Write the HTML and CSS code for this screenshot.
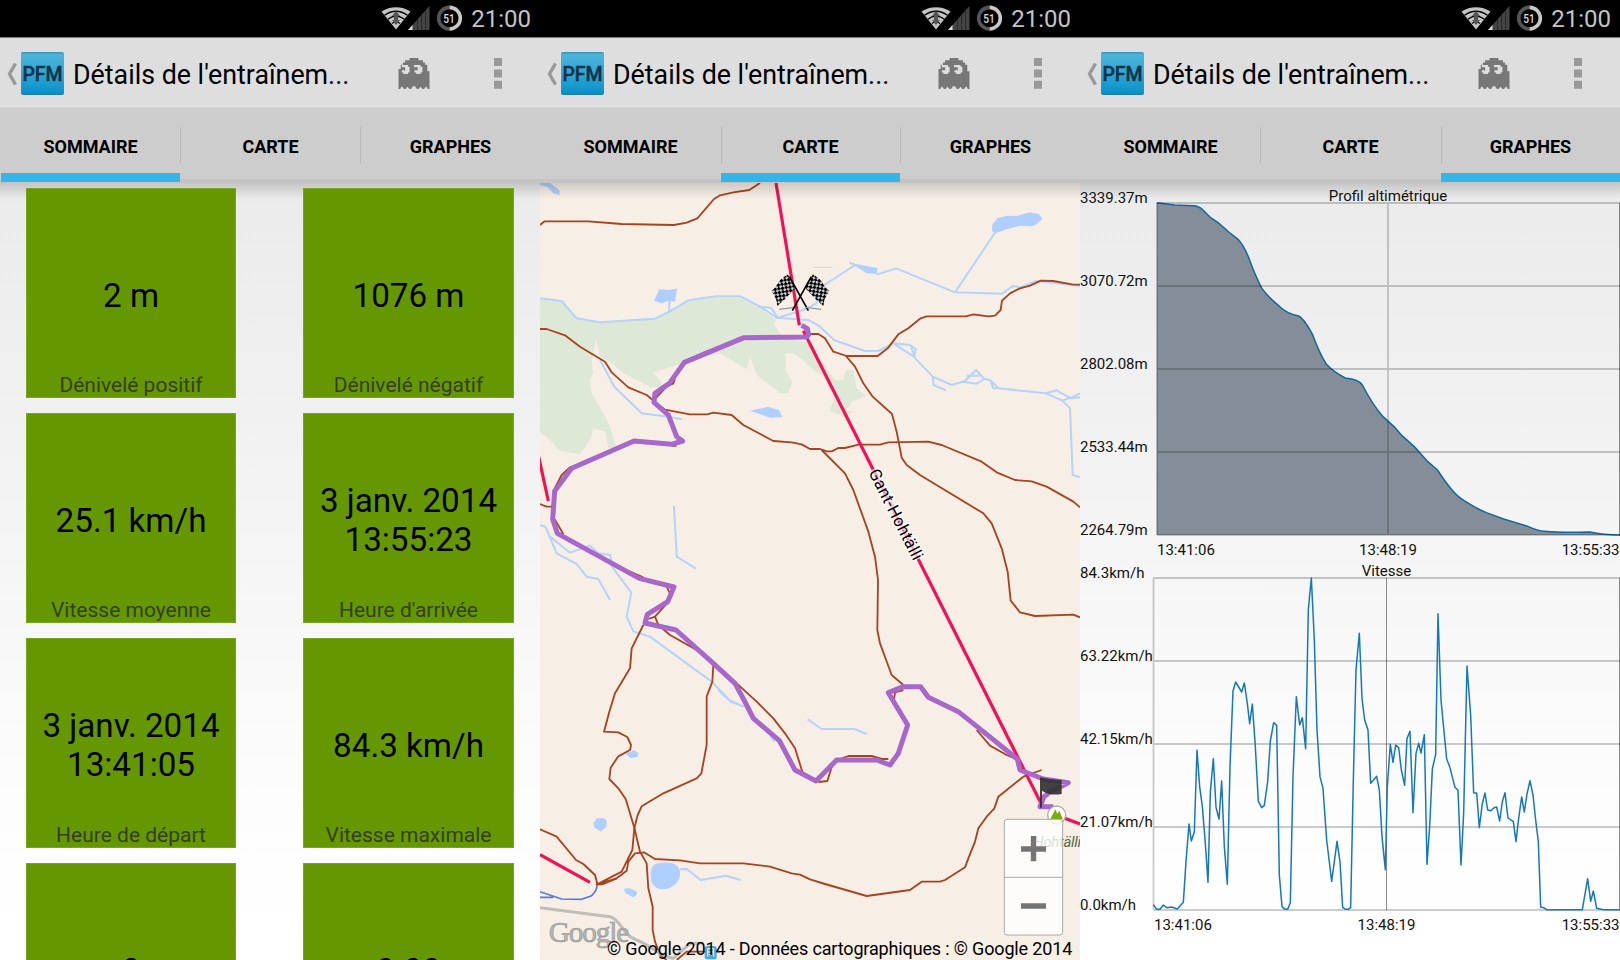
FILE: index.html
```html
<!DOCTYPE html>
<html lang="fr">
<head>
<meta charset="utf-8">
<title>Détails de l'entraînement</title>
<link rel="stylesheet" href="styles.css">
</head>
<body>
<svg class="defs" width="0" height="0" aria-hidden="true">
  <defs>
    <linearGradient id="sheen" x1="0" y1="0" x2="0" y2="1"><stop offset="0" stop-color="#3a8fb0"/><stop offset=".06" stop-color="#4cb4da"/><stop offset=".5" stop-color="#2fa6d4"/><stop offset=".93" stop-color="#0d94cb"/><stop offset="1" stop-color="#1c7fa8"/></linearGradient>
    <symbol id="status" viewBox="0 0 90 37">
      <path d="M1.500 11.500C10 5.700 22 5.700 30.500 11.500L16 29.500Z" fill="#c4c4c4"/>
      <path d="M4.500 15.200C12 10 20 10 27.500 15.200M8 19.300C13 15.300 19 15.300 24.500 19.300M12 23.500C14.500 21.500 17.500 21.500 20 23.500" fill="none" stroke="#000" stroke-width="1.300"/>
      <path d="M16 11L20 16H18V20H20L16 25L12 20H14V16H12Z" fill="#555"/>
      <path d="M28 30L49.500 6V30Z" fill="#444"/>
      <path d="M28 30L32.500 25V30Z" fill="#ddd"/>
      <path d="M37.500 19V30M41.500 14V30M45.500 10V30" stroke="#222" stroke-width=".8"/>
      <path d="M69.500 7.400A10.800 10.800 0 0 0 69.500 29" fill="none" stroke="#555" stroke-width="3.600"/>
      <path d="M69.500 7.400A10.800 10.800 0 0 1 69.500 29" fill="none" stroke="#c8c8c8" stroke-width="3.600"/>
      <text x="69" y="22.800" font-size="12.500" font-weight="500" text-anchor="middle" fill="#ddd" textLength="11.500" lengthAdjust="spacingAndGlyphs">51</text>
    </symbol>
    <symbol id="back" viewBox="0 0 10 22"><path d="M8.500 .5L2.500 11L8.500 21.500" fill="none" stroke="#999" stroke-width="3.400"/></symbol>
    <symbol id="pfm" viewBox="0 0 43 43">
      <rect width="43" height="43" rx="2" fill="url(#sheen)"/>
      <text x="21.500" y="29.300" text-anchor="middle" font-size="19.500" font-weight="500" fill="#123448" stroke="#123448" stroke-width=".4" textLength="40">PFM</text>
    </symbol>
    <symbol id="ghost" viewBox="0 0 14 14">
      <path fill-rule="evenodd" fill="#777" d="M5 0H9V1H11V2H12V3H13V6H14V14H13.300L12.500 12.800L11.500 14H10.800L10 13L9 14H8.300L7.500 12.800H6.500L5.700 14H5L4 13L3.200 14H2.500L1.500 12.800L.7 14H0V5H1V3H2V2H3V1H5ZM1.500 3.200V4.200H3V5.500H1.500V6.500H2.200V7.200H4.300V6.500H5V4H4.300V3.200ZM7 3.200V4.200H8.700V5.500H7.200V6.500H8V7.200H10V6.500H10.800V4H10V3.200Z"/>
    </symbol>
    <symbol id="more" viewBox="0 0 8 31"><path d="M0 0H8V8H0ZM0 11.400H8V19.400H0ZM0 22.800H8V30.800H0Z" fill="#999"/></symbol>
    <pattern id="checks" width="16" height="16" patternUnits="userSpaceOnUse" patternTransform="translate(695 335) rotate(36)">
      <rect width="16" height="16" fill="#ccc"/><path d="M0 0H9V9H0ZM8 8H16V16H8Z" fill="#000"/>
    </pattern>
    <g id="race-flag">
      <path d="M695 332L706 322L720 300L743 283L753 300L768 322L752 340L732 360L712 378L709 360Z" fill="url(#checks)"/>
      <path d="M748 290L805 392" stroke="#000" stroke-width="5"/>
      <path d="M718 388L764 382" stroke="#999" stroke-width="4"/>
    </g>
  </defs>
</svg>

<main class="screens">
  <section class="phone">
    <div class="statusbar"><svg class="status-icons"><use href="#status"/></svg><span class="clock">21:00</span></div>
    <header class="actionbar">
      <svg class="back"><use href="#back"/></svg><svg class="logo"><use href="#pfm"/></svg>
      <h1 class="title">Détails de l'entraînem...</h1>
      <svg class="ghost"><use href="#ghost"/></svg><svg class="more"><use href="#more"/></svg>
    </header>
    <nav class="tabs"><span class="tab active">SOMMAIRE</span><span class="tab">CARTE</span><span class="tab">GRAPHES</span></nav>
    <div class="content summary">
      <article class="tile"><p class="value">2 m</p><p class="label">Dénivelé positif</p></article>
      <article class="tile"><p class="value">1076 m</p><p class="label">Dénivelé négatif</p></article>
      <article class="tile"><p class="value">25.1 km/h</p><p class="label">Vitesse moyenne</p></article>
      <article class="tile"><p class="value">3 janv. 2014<br>13:55:23</p><p class="label">Heure d'arrivée</p></article>
      <article class="tile"><p class="value">3 janv. 2014<br>13:41:05</p><p class="label">Heure de départ</p></article>
      <article class="tile"><p class="value">84.3 km/h</p><p class="label">Vitesse maximale</p></article>
      <article class="tile"><p class="value">0</p></article>
      <article class="tile"><p class="value">0.00</p></article>
    </div>
  </section>

  <section class="phone">
    <div class="statusbar"><svg class="status-icons"><use href="#status"/></svg><span class="clock">21:00</span></div>
    <header class="actionbar">
      <svg class="back"><use href="#back"/></svg><svg class="logo"><use href="#pfm"/></svg>
      <h1 class="title">Détails de l'entraînem...</h1>
      <svg class="ghost"><use href="#ghost"/></svg><svg class="more"><use href="#more"/></svg>
    </header>
    <nav class="tabs"><span class="tab">SOMMAIRE</span><span class="tab active">CARTE</span><span class="tab">GRAPHES</span></nav>
    <div class="content map">
      <svg class="map-canvas" viewBox="0 9 1620 2331">
        <path class="wood" d="M0 357L65 365L112 416L182 427L345 416L440 363L530 352H600L650 378L710 420L700 432L725 465L810 490L830 530L865 570L885 600L910 600L920 568L940 570L950 625L978 648L935 665L920 690L940 695L915 712L870 692L885 645L850 590L835 580L810 562L790 540L757 520L737 520L737 570L757 605L745 640L720 640L650 585L630 530L620 568L540 520L433 550L400 558L338 578L360 600L370 625L330 620L250 580L210 545L180 530L168 475L155 545L160 580L150 600L155 640L185 690L210 740L228 800L205 805L197 755L160 745L150 780L120 823L60 812L30 780L0 755Z"/>
        <g class="lake">
          <path d="M0 9H30L58 30L60 46L40 40L22 20L0 16ZM358 328L385 330L411 326L405 365L385 362L365 370L342 362ZM630 692L685 681L717 690L727 711L690 713L665 704ZM930 248L1013 265L1011 282L980 280ZM1357 135L1372 115L1400 107L1430 108L1470 97L1497 103L1507 116L1490 133L1475 139L1440 137L1400 148L1366 160L1356 152Z"/>
          <path d="M256 1721L283 1710L296 1720L292 1730L273 1735ZM160 1930L170 1915L190 1914L201 1922L199 1940L182 1955L163 1942ZM252 2126L270 2125L291 2135L289 2146L280 2152L256 2140ZM332 2090C330 2055 345 2047 372 2048C395 2045 422 2055 420 2080C422 2105 395 2128 368 2128C345 2125 333 2115 332 2090Z"/>
        </g>
        <g class="river">
          <path d="M0 355L65 363L110 415L180 427L345 416L388 395L445 361L530 349H602L660 380L710 413L805 420L835 436L882 480L975 513H1015L1060 490L1110 495L1127 507L1123 532L1178 590L1235 615L1275 603L1308 570L1333 597L1310 611L1270 605M1060 490L1125 532L1113 500M1178 590L1181 615L1218 631M1280 587H1320M1333 597L1352 601L1376 625L1518 640L1550 631L1592 655L1620 652M1352 601L1360 625H1376M1518 640L1567 662L1590 685L1598 885L1620 892M1567 662L1600 650L1620 640"/>
          <path d="M388 395V362M655 380L693 383L713 413L790 390L830 370L830 330L945 255L928 248M1010 284L1068 265L1245 337L1387 341L1418 318L1440 322L1490 302L1550 310L1620 318M1245 337L1365 158M180 540L223 620L305 700L385 710L425 718M0 1035L17 1041L28 1068L90 1118L150 1097L175 1120L211 1125L216 1160L274 1238L260 1310L280 1354L330 1370L515 1505L568 1560L610 1580M28 1068L50 1120L110 1152L140 1190L175 1197L210 1260M402 977L410 1130L468 1166M535 1530L572 1565L612 1580M690 1665L703 1685M803 1618L845 1647H943L980 1662M420 2068L440 2067L482 2100L558 2087L602 2100"/>
        </g>
        <g class="trail">
          <path d="M0 135L14 124H145L245 132L402 135L440 128L472 115L522 57L540 46L580 37L628 30L660 9"/>
          <path d="M0 447H20L75 466L120 500L195 545L215 577L265 622L320 645L340 662L375 689L450 703H502L520 698L575 705L610 735L700 783L755 787L785 793L810 807H840L860 814H875L895 804L915 804L955 794H1020L1045 787L1165 785L1205 795L1325 845L1370 877L1425 900L1475 904L1520 920L1600 965L1620 982"/>
          <path d="M810 462H835L855 475L880 515L920 528H1013L1043 505L1075 463L1105 445L1142 415L1160 409H1278L1300 403L1345 409L1365 407L1382 390L1386 362L1410 340L1440 325L1470 317L1503 302L1540 303L1600 314H1620"/>
          <path d="M918 528L945 560L970 610L998 650L1056 702L1070 755L1085 833L1100 855L1140 885L1330 1000L1355 1030L1385 1105L1403 1175L1412 1262L1440 1297L1485 1308L1600 1304L1620 1312"/>
          <path d="M845 810L915 880L940 930L985 1055L1005 1130L1014 1200L1012 1350L1020 1390L1055 1485L1090 1515M1090 1530L1065 1537L1062 1560M385 705L410 775M340 662L380 620L400 610L405 597M433 547L500 514L540 503M395 798L410 797M92 860L65 885L44 925M44 1018L70 1062M0 972L20 980H38M270 1175L310 1192M380 1220L390 1240M383 1268L345 1310L325 1317M345 1310L355 1335L390 1365L470 1410L590 1510L650 1565L700 1615L735 1660L765 1705L790 1785"/>
          <path d="M310 1335L275 1405L270 1465L225 1540L208 1595L192 1655L235 1657L262 1671L273 1695L270 1710L235 1729L212 1763L208 1797L235 1825L257 1857L283 1943L300 2015L320 2050L325 2125L338 2180V2250L345 2285L360 2325L380 2340"/>
          <path d="M520 1455L517 1505L500 1550V1695L484 1780L470 1795L370 1840L305 1879L293 1905L283 1945L277 2010L245 2075L170 2114L230 2095L260 2072L265 2045L285 2020L312 2017L345 2037L420 2041L480 2050H610L690 2060L755 2080L780 2084L810 2098L855 2112L980 2148L1110 2130L1145 2105H1200L1215 2100L1275 2062L1285 2035L1305 1985L1315 1945L1340 1910L1363 1885L1375 1850L1450 1790L1505 1770"/>
          <path d="M170 2114L190 2112L230 2095M0 1948L50 1970L108 2040L130 2052L165 2085L172 2112M835 1806L862 1803L880 1745L925 1728H995L1025 1737L1045 1737M1310 1650L1350 1697L1400 1725L1425 1735"/>
          <path d="M410 2340L440 2315H540"/>
        </g>
        <path class="road" d="M0 2183L210 2210C245 2220 245 2265 290 2280C340 2300 360 2330 400 2335L450 2290H490"/>
        <path class="rail" d="M0 2135L65 2157L125 2158L155 2147Q172 2130 171 2115M0 2152H40"/>
        <g class="lift"><path d="M708 9L778 436"/><path d="M790 452L1508 1880"/><path d="M-4 830L25 963"/><path d="M0 2024L150 2107"/><path d="M1540 1902L1620 1932"/></g>
        <use href="#race-flag"/><use href="#race-flag" transform="matrix(-1 0 0 1 1562 0)"/>
        <path d="M820 262H877" stroke="#ddd5cc" stroke-width="3"/>
        <path class="track" d="M785 436L802 446L806 464L800 471L612 473L433 547L388 610L345 640L342 667L385 705L410 770L428 783L395 793L282 783L95 865L44 933L38 1018L52 1060L298 1195L402 1221L383 1265L322 1303L315 1329L408 1350L520 1450L585 1510L612 1560L640 1615L718 1682L765 1770L828 1803L890 1740H1010L1050 1755L1075 1720L1103 1635L1045 1538L1090 1520H1142L1165 1552L1255 1595L1330 1655L1432 1737L1440 1770L1510 1797L1585 1808L1530 1836L1512 1850L1500 1880H1540"/>
        <text class="lift-name" transform="translate(1066 1004) rotate(63)" text-anchor="middle" y="15" textLength="300">Gant-Hohtälli</text>
        <path d="M1500 1792Q1535 1800 1565 1800V1842Q1530 1848 1506 1832V1883H1500Z" fill="#333" opacity=".92"/>
        <circle cx="1550" cy="1905" r="27" fill="#fff" stroke="#aaa" stroke-width="4"/>
        <path d="M1531 1917L1546 1888L1552 1902L1558 1892L1568 1917Z" fill="#78b000"/>
        <text class="place" x="1480" y="2000" textLength="143">Hohtälli</text>
        <rect x="494" y="2298" width="36" height="40" rx="8" fill="#4ba3ea"/>
        <path d="M503 2330V2306H521V2330M503 2316H521M507 2324H517" fill="none" stroke="#fff" stroke-width="3"/>
        <text class="google" x="26" y="2285" textLength="242">Google</text>
        <g><rect x="1393" y="1918" width="175" height="347" rx="8" fill="#fff" fill-opacity=".78" stroke="#aaa" stroke-width="3"/>
        <path d="M1393 2092H1568" stroke="#aaa" stroke-width="3"/>
        <path d="M1443 2007H1518M1480.500 1968V2044M1443 2178H1518" stroke="#757575" stroke-width="16"/></g>
        <text class="credit" x="201" y="2324" textLength="1396">© Google 2014 - Données cartographiques : © Google 2014</text>
      </svg>
    </div>
  </section>

  <section class="phone">
    <div class="statusbar"><svg class="status-icons"><use href="#status"/></svg><span class="clock">21:00</span></div>
    <header class="actionbar">
      <svg class="back"><use href="#back"/></svg><svg class="logo"><use href="#pfm"/></svg>
      <h1 class="title">Détails de l'entraînem...</h1>
      <svg class="ghost"><use href="#ghost"/></svg><svg class="more"><use href="#more"/></svg>
    </header>
    <nav class="tabs"><span class="tab">SOMMAIRE</span><span class="tab">CARTE</span><span class="tab active">GRAPHES</span></nav>
    <div class="content graphs">
      <svg class="chart altitude" viewBox="0 183 540 377">
        <g transform="translate(0 180) scale(.34436 .33333)">
          <path class="area" d="M223 1065V68L275 75L330 77Q345 78 355 88L378 112L400 127L432 156L460 179Q475 195 490 233Q508 285 528 325Q545 350 580 380Q600 400 635 408Q650 415 675 463Q695 520 715 552Q735 575 770 594Q810 598 820 615Q850 675 880 710L915 743L935 767L970 799L1010 845L1038 870Q1060 905 1078 927Q1095 950 1120 965Q1150 985 1180 998L1230 1017L1300 1039Q1330 1052 1350 1054Q1400 1059 1480 1056Q1520 1065 1568 1065Z"/>
          <path class="line" d="M223 68L275 75L330 77Q345 78 355 88L378 112L400 127L432 156L460 179Q475 195 490 233Q508 285 528 325Q545 350 580 380Q600 400 635 408Q650 415 675 463Q695 520 715 552Q735 575 770 594Q810 598 820 615Q850 675 880 710L915 743L935 767L970 799L1010 845L1038 870Q1060 905 1078 927Q1095 950 1120 965Q1150 985 1180 998L1230 1017L1300 1039Q1330 1052 1350 1054Q1400 1059 1480 1056Q1520 1065 1568 1065"/>
        </g>
        <path class="grid" d="M77 203H540M77 286H540M77 369H540M77 452H540M77 535H540M77 203V535M308 203V535"/>
        <path class="grid dark" d="M539.500 203V535"/>
        <text x="0" y="202.500">3339.37m</text><text x="0" y="285.500">3070.72m</text><text x="0" y="368.500">2802.08m</text><text x="0" y="451.500">2533.44m</text><text x="0" y="534.500">2264.79m</text>
        <text x="308" y="200.500" class="mid">Profil altimétrique</text>
        <text x="77" y="554.500">13:41:06</text><text x="308" y="554.500" class="mid">13:48:19</text><text x="539.500" y="554.500" class="end">13:55:33</text>
      </svg>
      <svg class="chart speed" viewBox="0 560 540 400">
        <path class="grid" d="M73.500 578H540M73.500 661H540M73.500 744H540M73.500 827H540M73.500 910H540M73.500 578V910"/>
        <path class="grid dark" d="M306.500 578V910M539.500 578V910"/>
        <g transform="translate(0 560) scale(.33333)">
          <path class="line" d="M220 1034L230 1048H240L250 1035L260 1043L275 1041L292 1047L310 1027L318 905L327 792L334 843L343 815L351 571L359 680L367 740L376 850L384 967L391 697L400 596L408 742L417 777L425 663L433 860L442 973L450 620L459 393L467 366L485 396L493 369L502 430L509 491L517 432L526 560L535 724L545 743L553 736L563 665L571 543L581 488L590 496L598 945L606 1040L615 1048H623L631 1028L639 650L649 410L659 495L667 473L677 566L685 148L694 54L703 240L711 510L720 650L729 685L740 840L755 964L763 905L771 844L780 905L788 1042L797 1048H805L812 1042L820 660L828 330L838 220L846 415L854 480L864 510L872 670L890 649L898 690L906 830L916 929L922 680L931 553L939 607L947 555L956 563L964 630L974 676L981 535L990 514L999 758L1008 580L1016 550L1023 579L1033 524L1041 913L1049 800L1057 627L1067 583L1074 161L1083 420L1100 597L1109 620L1125 682L1134 691L1143 915L1151 760L1161 318L1172 465L1181 699H1190L1198 803L1207 730L1215 699L1223 750L1233 752L1242 743L1250 741L1259 783L1267 725L1275 698L1284 774L1300 785L1308 845L1316 775L1325 711L1333 756L1341 702L1350 662L1359 705L1367 780L1375 845L1382 1041L1391 1043L1400 1049H1507L1523 956L1532 1024L1540 993L1550 1045L1570 1049H1620"/>
        </g>
        <text x="0" y="577.500">84.3km/h</text><text x="0" y="660.500">63.22km/h</text><text x="0" y="743.500">42.15km/h</text><text x="0" y="826.500">21.07km/h</text><text x="0" y="909.500">0.0km/h</text>
        <text x="306.500" y="576" class="mid">Vitesse</text>
        <text x="74" y="929.500">13:41:06</text><text x="306.500" y="929.500" class="mid">13:48:19</text><text x="539.500" y="929.500" class="end">13:55:33</text>
      </svg>
    </div>
  </section>
</main>
</body>
</html>
```
FILE: styles.css
```css
* { box-sizing: border-box; }
body { margin: 0; width: 1620px; height: 960px; overflow: hidden; font-family: Roboto, "Noto Sans", sans-serif; color: #000; }
.defs { display: block; }
svg { display: block; flex: none; }
svg text { font-family: Roboto, "Noto Sans", sans-serif; }
.screens { display: grid; grid-template-columns: repeat(3, 540px); height: 960px; }
.phone { display: flex; flex-direction: column; height: 960px; overflow: hidden; }

.statusbar { display: flex; flex: none; height: 38px; padding-right: 9px; justify-content: flex-end; background: #000; border-bottom: 1px solid #777; color: #c4c4c4; }
.status-icons { width: 90px; height: 37px; }
.clock { width: 61px; text-align: right; font-size: 24px; line-height: 39px; }

.actionbar { display: flex; flex: none; align-items: center; height: 69px; padding: 2px 38px 0 7px; background: #dedede; }
.back { width: 10px; height: 22px; margin-right: 4px; }
.logo { width: 43px; height: 43px; }
.title { flex: 1; margin: 2px 0 0 9px; font-size: 26.800px; font-weight: 400; line-height: 32px; white-space: nowrap; }
.ghost { width: 32px; height: 31px; margin-right: 64px; }
.more { width: 8px; height: 31px; }

.tabs { display: grid; grid-template-columns: repeat(3, 1fr); flex: none; height: 76px; padding-top: 4px; background: #cdcdcd; border-bottom: 4px solid #c3c3c3; border-top: 1px solid #d6d6d6; }
.tab { display: flex; align-items: center; justify-content: center; height: 70px; padding: 0 0 1px 1px; font-size: 18px; font-weight: 700; background: linear-gradient(#b9b9b9, #b9b9b9) left 0 top 15px / 1px 37px no-repeat; }
.tab:first-child { background: none; }
.tab.active { border-bottom: 9px solid #35b5e7; padding: 8px 0 0; margin-left: 1px; }

.content { flex: 1; min-height: 0; background: linear-gradient(rgba(0,0,0,.16), rgba(0,0,0,0) 16px), linear-gradient(#ebebeb, #f1f1f1 30%, #fdfdfd 80%, #fff); }
.summary { display: grid; grid-template-columns: 210px 211px; grid-auto-rows: 210px; column-gap: 67px; row-gap: 15px; padding: 5.400px 26px 0; overflow: hidden; align-content: start; }
.tile { display: grid; grid-template: 1fr / 1fr; background: #659800; border: 1px solid #78a520; }
.value, .label { grid-area: 1 / 1; margin: 0; text-align: center; }
.value { align-self: center; padding-top: 5px; font-size: 33.200px; line-height: 38.500px; }
.label { align-self: end; font-size: 21px; line-height: 24px; color: #33401a; }

.map { position: relative; background: #f7efe6; }
.map::after { content: ""; position: absolute; inset: 0 0 auto; height: 16px; background: linear-gradient(rgba(0,0,0,.16), rgba(0,0,0,0)); }
.map-canvas { width: 540px; height: 777px; }
.map path { stroke-linejoin: round; }
.wood { fill: #dee8d7; }
.lake { fill: #aecfff; }
.river { fill: none; stroke: #b5d3fb; stroke-width: 6; }
.trail { fill: none; stroke: #a8431f; stroke-width: 5.500; }
.road { fill: none; stroke: #bfbdb8; stroke-width: 9; }
.rail { fill: none; stroke: #5478e4; stroke-width: 5; }
.lift { fill: none; stroke: #f50f55; stroke-width: 9.500; }
.track { fill: none; stroke: #a767cb; stroke-width: 15; }
.lift-name { font-size: 50px; stroke: rgba(255,255,255,.7); stroke-width: 9px; paint-order: stroke; }
.place { font-size: 45px; font-style: italic; fill: #55684a; }
.map .google { font-family: "Liberation Serif", serif; font-size: 88px; fill: #b8b5b0; stroke: #999; stroke-width: 2px; }
.credit { font-size: 54px; }

.graphs { display: flex; flex-direction: column; }
.altitude { width: 540px; height: 377px; }
.speed { width: 540px; height: 400px; }
.chart text { font-size: 15px; fill: #111; }
.chart .mid { text-anchor: middle; }
.chart .end { text-anchor: end; }
.area { fill: #858e98; }
.line { fill: none; stroke: #1578bd; stroke-width: 1.500px; vector-effect: non-scaling-stroke; stroke-linejoin: round; }
.altitude .line { stroke: #0f689f; }
.grid { fill: none; stroke: rgba(0,0,0,.2); stroke-width: 1.800px; }
.grid.dark { stroke: rgba(0,0,0,.45); stroke-width: 1px; }
```
